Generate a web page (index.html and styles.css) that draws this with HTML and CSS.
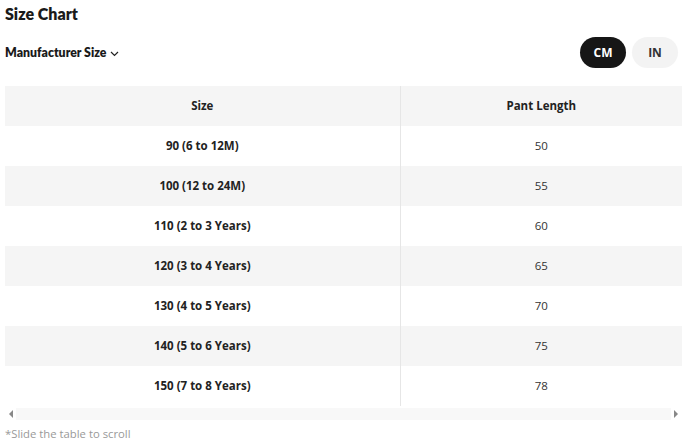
FILE: index.html
```html
<!DOCTYPE html>
<html>
<head>
<meta charset="utf-8">
<link rel="stylesheet" href="styles.css">
</head>
<body>
<div class="page">
  <h1 class="title">Size Chart</h1>
  <div class="toolbar">
    <div class="dropdown">Manufacturer Size
      <svg class="chev" width="9" height="6" viewBox="0 0 9 6"><path d="M1 1l3.5 3.5L8 1" fill="none" stroke="#222" stroke-width="1.2"/></svg>
    </div>
    <div class="units">
      <span class="unit active">CM</span>
      <span class="unit">IN</span>
    </div>
  </div>
  <div class="tablewrap">
    <table class="chart">
      <thead>
        <tr><th class="c1">Size</th><th class="c2">Pant Length</th></tr>
      </thead>
      <tbody>
        <tr><td class="c1">90 (6 to 12M)</td><td class="c2">50</td></tr>
        <tr class="alt"><td class="c1">100 (12 to 24M)</td><td class="c2">55</td></tr>
        <tr><td class="c1">110 (2 to 3 Years)</td><td class="c2">60</td></tr>
        <tr class="alt"><td class="c1">120 (3 to 4 Years)</td><td class="c2">65</td></tr>
        <tr><td class="c1">130 (4 to 5 Years)</td><td class="c2">70</td></tr>
        <tr class="alt"><td class="c1">140 (5 to 6 Years)</td><td class="c2">75</td></tr>
        <tr><td class="c1">150 (7 to 8 Years)</td><td class="c2">78</td></tr>
      </tbody>
    </table>
    <div class="scrollbar">
      <span class="arrow left"></span>
      <span class="track"></span>
      <span class="arrow right"></span>
    </div>
  </div>
  <p class="note">*Slide the table to scroll</p>
</div>
</body>
</html>
```
FILE: styles.css
```css
* { box-sizing: border-box; }
html, body { margin: 0; padding: 0; background: #fff; }
body { font-family: Lato, "Open Sans", sans-serif; color: #222; }
.page { padding: 5px 5px 0 5px; width: 689px; }
.title {
  margin: 0;
  font-size: 16px;
  font-weight: 800;
  line-height: 18px;
  color: #1a1a1a;
}
.toolbar {
  display: flex;
  justify-content: space-between;
  align-items: center;
  margin-top: 14px;
  padding-right: 6px;
}
.dropdown {
  font-size: 12.3px;
  font-weight: 800;
  display: flex;
  align-items: center;
  gap: 4px;
  color: #1a1a1a;
}
.chev { margin-top: 2px; }
.units { display: flex; gap: 6px; }
.unit {
  width: 46px;
  height: 31px;
  border-radius: 16px;
  display: flex;
  align-items: center;
  justify-content: center;
  font-family: "Open Sans", sans-serif;
  font-size: 12px;
  font-weight: 700;
  background: #f3f3f3;
  color: #333;
}
.unit.active { background: #161616; color: #fff; }
.tablewrap { margin-top: 18px; width: 677px; }
.chart {
  width: 677px;
  border-collapse: collapse;
  font-family: "Open Sans", sans-serif;
  font-size: 11.5px;
}
.chart th, .chart td {
  height: 40px;
  text-align: center;
  padding: 0 0 1px 0;
}
.chart th { font-weight: 700; background: #f5f5f5; color: #222; }
.chart .c1 { width: 395px; font-weight: 700; color: #222; }
.chart .c2 { border-left: 1px solid #e6e6e6; font-weight: 400; color: #333; }
.chart th.c2 { font-weight: 700; color: #222; }
.chart tr.alt td { background: #f5f5f5; }
.scrollbar {
  display: flex;
  align-items: center;
  height: 16px;
}
.arrow { width: 0; height: 0; border-top: 4px solid transparent; border-bottom: 4px solid transparent; }
.arrow.left { border-right: 4px solid #888; margin-left: 4px; margin-right: 3px; }
.arrow.right { border-left: 4px solid #888; margin-left: 3px; margin-right: 4px; }
.track { flex: 1; height: 12px; background: #f8f8f8; }
.note {
  margin: 4px 0 0 0;
  font-family: "Open Sans", sans-serif;
  font-size: 11.3px;
  color: #999;
}
```
